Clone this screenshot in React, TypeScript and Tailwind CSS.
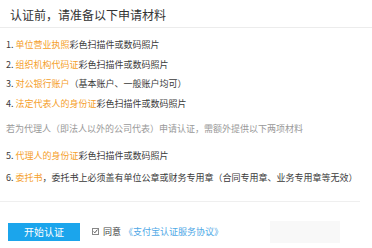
const items: { no: string; hl: string; rest: string }[] = [
  { no: "1.", hl: "单位营业执照", rest: "彩色扫描件或数码照片" },
  { no: "2.", hl: "组织机构代码证", rest: "彩色扫描件或数码照片" },
  { no: "3.", hl: "对公银行账户", rest: "（基本账户、一般账户均可）" },
  { no: "4.", hl: "法定代表人的身份证", rest: "彩色扫描件或数码照片" },
];

const extra: { no: string; hl: string; rest: string }[] = [
  { no: "5.", hl: "代理人的身份证", rest: "彩色扫描件或数码照片" },
  {
    no: "6.",
    hl: "委托书",
    rest: "，委托书上必须盖有单位公章或财务专用章（合同专用章、业务专用章等无效）",
  },
];

function Item({ no, hl, rest, lh }: { no: string; hl: string; rest: string; lh?: string }) {
  return (
    <div className={(lh ?? "leading-[19.5px]") + " whitespace-nowrap text-[#3a3a3a]"}>
      <span>{no} </span>
      <span className="text-[#f5a02a]">{hl}</span>
      <span>{rest}</span>
    </div>
  );
}

export default function App() {
  return (
    <div className="w-[372px] h-[248px] bg-white overflow-hidden font-['Noto_Sans_CJK_SC','Noto_Sans',sans-serif]">
      <div className="h-[28px] pl-[10px] pt-[2px] flex items-center text-[12px] text-[#333] border-b border-[#ececec]">
        认证前，请准备以下申请材料
      </div>
      <div className="pl-[6px] pt-[7px] text-[9px]">
        {items.map((it) => (
          <Item key={it.no} {...it} />
        ))}
        <div className="mt-[6px] leading-[19.5px] text-[#999] whitespace-nowrap">
          若为代理人（即法人以外的公司代表）申请认证，需额外提供以下两项材料
        </div>
        <div className="mt-[6px]">
          {extra.map((it) => (
            <Item key={it.no} {...it} lh="leading-[22px]" />
          ))}
        </div>
      </div>
      <div className="mt-[12px] w-[360px] border-t border-[#efefef]" />
      <div className="flex items-center pl-[8px] pt-[19px]">
        <button className="w-[72px] h-[18px] bg-[#1ba5ec] text-white text-[10px] leading-none">
          开始认证
        </button>
        <label className="ml-[12px] flex items-center text-[9px] text-[#444]">
          <span className="w-[7px] h-[7px] border border-[#888] flex items-center justify-center mr-[4px]">
            <svg viewBox="0 0 8 8" className="w-[5px] h-[5px]">
              <path d="M1 4 L3 6 L7 1" fill="none" stroke="#333" strokeWidth="1.3" />
            </svg>
          </span>
          同意
          <span className="ml-[3px] text-[#4ea8e6]">《支付宝认证服务协议》</span>
        </label>
        <div className="ml-auto mr-[32px] w-[70px] h-[22px] bg-[#f8f8f8]" />
      </div>
    </div>
  );
}
